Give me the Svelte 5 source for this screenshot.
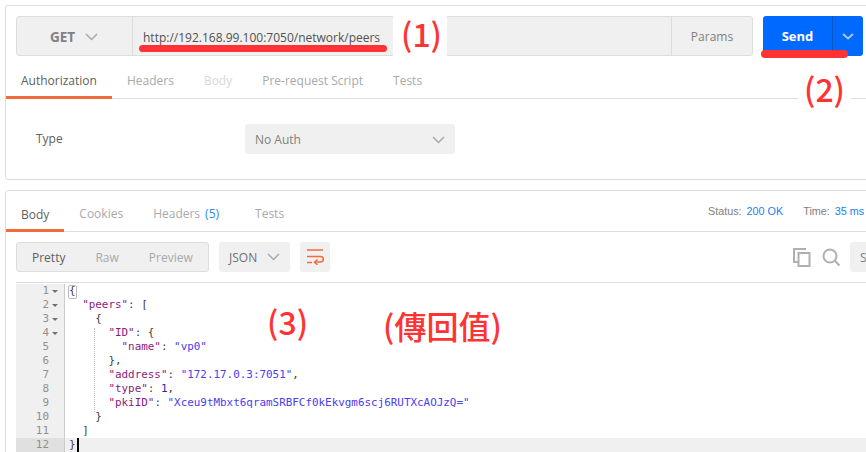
<script>
	const reqTabs = [
		{ label: 'Authorization', cls: 'active' },
		{ label: 'Headers', cls: '' },
		{ label: 'Body', cls: 'disabled' },
		{ label: 'Pre-request Script', cls: '' },
		{ label: 'Tests', cls: '' }
	];

	// k: key, s: string, n: number, p: punctuation
	const lines = [
		{ fold: true, parts: [['p', '{']] },
		{ fold: true, parts: [['p', '  '], ['k', '"peers"'], ['p', ': [']] },
		{ fold: true, parts: [['p', '    {']] },
		{ fold: true, parts: [['p', '      '], ['k', '"ID"'], ['p', ': {']] },
		{ parts: [['p', '        '], ['k', '"name"'], ['p', ': '], ['s', '"vp0"']] },
		{ parts: [['p', '      },']] },
		{ parts: [['p', '      '], ['k', '"address"'], ['p', ': '], ['s', '"172.17.0.3:7051"'], ['p', ',']] },
		{ parts: [['p', '      '], ['k', '"type"'], ['p', ': '], ['n', '1'], ['p', ',']] },
		{ parts: [['p', '      '], ['k', '"pkiID"'], ['p', ': '], ['s', '"Xceu9tMbxt6qramSRBFCf0kEkvgm6scj6RUTXcAOJzQ="']] },
		{ parts: [['p', '    }']] },
		{ parts: [['p', '  ]']] },
		{ parts: [['p', '}']], current: true }
	];
</script>

<div class="page">
	<section class="panel request">
		<div class="url-row">
			<div class="url-bar">
				<div class="method">
					<span>GET</span>
					<svg width="13" height="8" viewBox="0 0 13 8"><path d="M1 1l5.500 5.500L12 1" /></svg>
				</div>
				<div class="url"><span>http://192.168.99.100:7050/network/peers</span></div>
				<div class="params">Params</div>
			</div>
			<div class="send">
				<span class="send-label">Send</span>
				<span class="send-more">
					<svg width="12" height="7" viewBox="0 0 12 7"><path d="M1 1l5 4.500L11 1" /></svg>
				</span>
			</div>
		</div>

		<div class="tabs req-tabs">
			{#each reqTabs as tab}
				<div class={['tab', tab.cls]}>{tab.label}</div>
			{/each}
		</div>

		<div class="auth">
			<span class="type-label">Type</span>
			<div class="select">
				<span>No Auth</span>
				<svg width="13" height="8" viewBox="0 0 13 8"><path d="M1 1l5.500 5.500L12 1" /></svg>
			</div>
		</div>
	</section>

	<section class="panel response">
		<div class="tabs res-tabs">
			<div class="tab active">Body</div>
			<div class="tab">Cookies</div>
			<div class="tab">Headers<span class="count">(5)</span></div>
			<div class="tab tests">Tests</div>
			<div class="meta">
				<span>Status:</span><b>200 OK</b>
				<span class="time">Time:</span><b>35 ms</b>
			</div>
		</div>

		<div class="toolbar">
			<div class="views">
				<span class="on">Pretty</span>
				<span>Raw</span>
				<span>Preview</span>
			</div>
			<div class="format">
				<span>JSON</span>
				<svg width="13" height="8" viewBox="0 0 13 8"><path d="M1 1l5.500 5.500L12 1" /></svg>
			</div>
			<div class="wrap">
				<svg width="17" height="16" viewBox="0 0 17 16">
					<path d="M0 1h16M0 7.500h13.500q2.800 0 2.800 2.800t-2.800 2.800H8M0 13.500h5" />
					<path d="M10.500 10.500L7.500 13.200l3 2.600" />
				</svg>
			</div>
			<div class="tools">
				<svg class="copy" width="18" height="19" viewBox="0 0 18 19">
					<path d="M12 2V1H1v13h4" />
					<path d="M5.500 5h11v13h-11z" />
				</svg>
				<svg class="search" width="19" height="19" viewBox="0 0 19 19">
					<circle cx="8" cy="8" r="6.500" />
					<path d="M12.800 12.800L17.500 17.500" />
				</svg>
				<div class="search-box">S</div>
			</div>
		</div>

		<div class="editor">
			{#each lines as line, i}
				<div class={['line', { current: line.current }]}>
					<div class="gutter">
						<span class="num">{i + 1}</span>
						<span class="fold">{#if line.fold}<i></i>{/if}</span>
					</div>
					<pre class="code">{#each line.parts as [kind, text]}<span class={kind}>{text}</span>{/each}{#if line.current}<span class="cursor"></span>{/if}</pre>
				</div>
			{/each}
			<span class="match"></span>
			<span class="guide"></span>
		</div>
	</section>

	<!-- red marks drawn on top of the screenshot -->
	<span class="mark mark-1">(1)</span>
	<span class="mark mark-2">(2)</span>
	<span class="mark mark-3">(3)</span>
	<span class="mark mark-4">(傳回值)</span>
	<span class="stroke stroke-url"></span>
	<span class="stroke stroke-send"></span>
</div>

<style>
	:global(body) {
		margin: 0;
		background: #fff;
	}

	.page {
		position: relative;
		width: 866px;
		height: 452px;
		overflow: hidden;
		font-family: 'Open Sans', sans-serif;
		font-size: 12px;
		color: #808080;
	}

	svg {
		flex: none;
	}

	svg path,
	svg circle {
		fill: none;
		stroke: #a9a9a9;
		stroke-width: 1.500;
	}

	.panel {
		width: 900px;
		box-sizing: border-box;
		margin-left: 5px;
		border: 1px solid #ddd;
		border-radius: 3px;
	}

	.request {
		height: 175px;
		margin-top: 5px;
		padding-top: 10px;
	}

	.response {
		height: 290px;
		margin-top: 10px;
	}

	/* url row */
	.url-row {
		display: flex;
		padding-left: 10px;
		gap: 10px;
	}

	.url-bar {
		display: flex;
		width: 737px;
		height: 40px;
		box-sizing: border-box;
		border: 1px solid #ddd;
		border-radius: 3px;
		background: #f0f0f0;
	}

	.method {
		display: flex;
		align-items: center;
		width: 116px;
		padding: 2px 0 0 33px;
		gap: 10px;
		box-sizing: border-box;
		border-right: 1px solid #ddd;
		font-weight: 700;
		font-size: 13.500px;
		color: #808080;
	}

	.url {
		display: flex;
		flex: 1;
		align-items: center;
		padding: 2px 0 0 10px;
		color: #505050;
		font-size: 12px;
	}

	.params {
		display: flex;
		align-items: center;
		justify-content: center;
		width: 80px;
		padding-top: 1px;
		border-left: 1px solid #ddd;
		font-size: 12px;
	}

	.send {
		display: flex;
		width: 100px;
		height: 40px;
		border-radius: 3px;
		background: #0069ff;
		color: #fff;
		font-weight: 700;
		font-size: 13px;
	}

	.send-label {
		display: flex;
		align-items: center;
		justify-content: center;
		width: 69px;
		border-right: 1px solid #0a55c0;
	}

	.send-more {
		display: flex;
		flex: 1;
		align-items: center;
		justify-content: center;
	}

	.send-more path {
		stroke: #a8c8e8;
		stroke-width: 2;
	}

	/* tabs */
	.tabs {
		display: flex;
		box-sizing: border-box;
		border-bottom: 1px solid #ddd;
	}

	.req-tabs {
		height: 43px;
		padding-top: 7px;
	}

	.res-tabs {
		height: 41px;
		padding-top: 6px;
	}

	.tab {
		display: flex;
		align-items: center;
		padding: 0 15px 1px;
		height: 100%;
		box-sizing: border-box;
		white-space: pre;
		color: #a9a9a9;
	}

	.tab.active {
		color: #606060;
		margin-bottom: -1px;
		box-shadow: inset 0 -3px 0 #f26b3a;
		height: calc(100% + 1px);
	}

	.tab.disabled {
		color: #d8d8d8;
	}

	.tests {
		margin-left: 6px;
	}

	.count {
		margin-left: 5px;
		color: #2a8af0;
	}

	.meta {
		position: absolute;
		top: 205px;
		left: 708px;
		font-family: 'Liberation Sans', sans-serif;
		font-size: 10.800px;
		white-space: nowrap;
		color: #808080;
	}

	.meta b {
		font-weight: 400;
		color: #1a80f0;
		margin-left: 5px;
	}

	.meta .time {
		margin-left: 17px;
	}

	/* auth */
	.auth {
		display: flex;
		align-items: center;
		margin-top: 25px;
		padding-left: 30px;
	}

	.type-label {
		width: 209px;
		color: #606060;
		margin-top: -1px;
	}

	.select {
		display: flex;
		align-items: center;
		justify-content: space-between;
		width: 210px;
		height: 30px;
		box-sizing: border-box;
		padding: 1px 10px 0;
		border-radius: 3px;
		background: #f0f0f0;
	}

	/* toolbar */
	.toolbar {
		display: flex;
		align-items: center;
		margin-top: 10px;
		padding-left: 10px;
		height: 30px;
	}

	.toolbar > * {
		flex: none;
	}

	.views {
		display: flex;
		align-items: center;
		width: 193px;
		height: 30px;
		box-sizing: border-box;
		padding-left: 15px;
		gap: 30px;
		border: 1px solid #ddd;
		border-radius: 3px;
		background: #f0f0f0;
		color: #a9a9a9;
	}

	.views .on {
		color: #606060;
	}

	.format {
		display: flex;
		align-items: center;
		justify-content: space-between;
		width: 71px;
		height: 30px;
		box-sizing: border-box;
		margin-left: 10px;
		padding: 0 10px;
		border-radius: 3px;
		background: #f0f0f0;
		color: #707070;
	}

	.wrap {
		display: flex;
		align-items: center;
		justify-content: center;
		width: 30px;
		height: 30px;
		margin-left: 10px;
		border-radius: 3px;
		background: #f0f0f0;
	}

	.wrap path {
		stroke: #f26b3a;
		stroke-width: 1.500;
	}

	.tools {
		display: flex;
		align-items: center;
		margin-left: 463px;
	}

	.tools path,
	.tools circle {
		stroke: #b0b0b0;
		stroke-width: 2;
	}

	.search {
		margin-left: 11px;
	}

	.search-box {
		display: flex;
		align-items: center;
		flex: none;
		width: 60px;
		height: 30px;
		margin-left: 9px;
		padding-left: 10px;
		box-sizing: border-box;
		border-radius: 3px;
		background: #f0f0f0;
	}

	/* editor */
	.editor {
		position: relative;
		margin: 10px 0 0 10px;
		padding-top: 1px;
		border-top: 1px solid #ddd;
		font-family: 'DejaVu Sans Mono', monospace;
		font-size: 10.920px;
		line-height: 14px;
	}

	.line {
		display: flex;
		height: 14px;
	}

	.line.current {
		background: #f0f0f0;
		height: 16px;
	}

	.gutter {
		display: flex;
		flex: none;
		justify-content: flex-end;
		width: 49px;
		box-sizing: border-box;
		border-right: 1px solid #ccc;
		background: #f0f0f0;
		color: #909090;
		padding-right: 2px;
	}

	.current .gutter {
		background: #e0e0e0;
	}

	.fold {
		position: relative;
		width: 13px;
	}

	.fold i {
		position: absolute;
		top: 6px;
		left: 3px;
		border-left: 3px solid transparent;
		border-right: 3px solid transparent;
		border-top: 3px solid #707070;
	}

	.code {
		margin: 0;
		padding-left: 4px;
		font: inherit;
		color: #404040;
	}

	.k {
		color: #8c1a7c;
	}

	.s {
		color: #4a3cf0;
	}

	.n {
		color: #2a2a9a;
	}

	.cursor {
		display: inline-block;
		width: 1px;
		height: 15px;
		margin-left: 1px;
		border-left: 2px solid #000;
		vertical-align: top;
	}

	.match {
		position: absolute;
		top: 2px;
		left: 52px;
		width: 7px;
		height: 12px;
		border: 1px solid #bbb;
		border-radius: 2px;
	}

	.guide {
		position: absolute;
		top: 45px;
		left: 78px;
		height: 84px;
		border-left: 1px dotted #bbb;
	}

	/* annotations */
	.mark {
		position: absolute;
		font-family: 'Noto Sans CJK TC', sans-serif;
		font-weight: 500;
		font-size: 32px;
		line-height: 40px;
		color: #ff3333;
		background: #fff;
		white-space: nowrap;
	}

	.mark-1 {
		top: 13px;
		left: 393px;
		width: 54px;
		height: 43px;
		box-sizing: border-box;
		padding-left: 3px;
		text-align: center;
	}

	.mark-2 {
		top: 68px;
		left: 798px;
		width: 53px;
		text-align: center;
	}

	.mark-3 {
		top: 301px;
		left: 267px;
		background: none;
	}

	.mark-4 {
		top: 305px;
		left: 383px;
		background: none;
	}

	.stroke {
		position: absolute;
		border-radius: 4px;
		background: #ff3333;
	}

	.stroke-url {
		top: 45px;
		left: 139px;
		width: 248px;
		height: 7px;
	}

	.stroke-send {
		top: 50px;
		left: 761px;
		width: 87px;
		height: 8px;
	}
</style>
